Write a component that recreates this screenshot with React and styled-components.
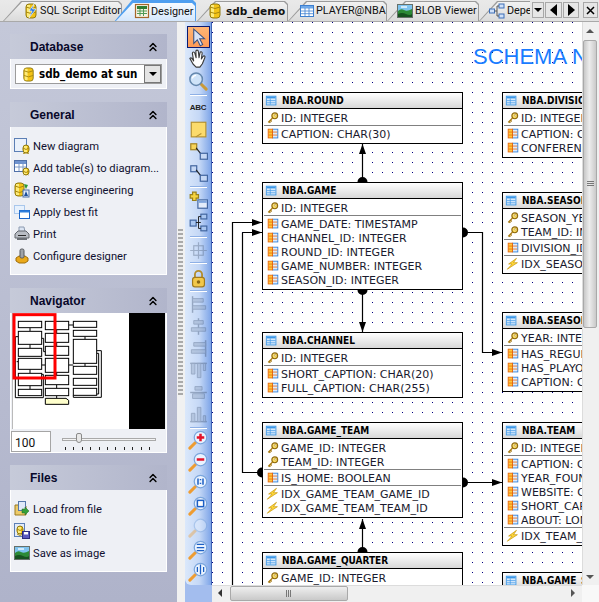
import React from "react";
import styled, { createGlobalStyle } from "styled-components";
import { ChevronsUp } from "lucide-react";

const GlobalStyle = createGlobalStyle`
  html, body { margin: 0; padding: 0; background: #f0f0f0; overflow: hidden; }
  * { box-sizing: border-box; }
  svg { flex: none; display: block; }
`;

const UI_FONT = `Roboto, "Liberation Sans", Arial, sans-serif`;
const HEAD_FONT = `"Liberation Sans", Arial, sans-serif`;
const BOLD_FONT = `"DejaVu Sans Condensed", "DejaVu Sans", sans-serif`;

// ---- icons
const Svg = ({ size = 16, children, dim }) => (
  <svg width={size} height={size} viewBox="0 0 16 16" style={dim ? { opacity: 0.4 } : undefined}>
    {children}
  </svg>
);

const Cylinder = ({ x = 3, y = 1, w = 10, h = 14 }) => (
  <g>
    <rect x={x} y={y} width={w} height={h} rx="3" fill="#f3c316" stroke="#8f7a12" />
    <rect x={x + 1} y={y + 1} width="3" height={h - 2} fill="#fdeb7a" />
    <path d={`M${x} ${y + 3}q${w / 2} 3 ${w} 0M${x} ${y + 8}q${w / 2} 3 ${w} 0`} fill="none" stroke="#a8890f" />
  </g>
);
const DbIcon = ({ size }) => <Svg size={size}><Cylinder /></Svg>;
const SqlIcon = () => (
  <Svg>
    <Cylinder />
    <path d="M11 1L6 8h3l-3 7 7-9H9.500z" fill="#2b7de9" stroke="#fff" strokeWidth="0.6" />
  </Svg>
);
const DesignerIcon = () => (
  <Svg>
    <rect x="1.500" y="1.500" width="13" height="13" fill="#f7f3e3" stroke="#a5672a" strokeWidth="1.200" />
    <rect x="3" y="3" width="10" height="3" fill="#2f7d32" />
    <path d="M3 8h10M3 10.500h10M6 6v7M9.500 6v7" stroke="#4f9a55" />
  </Svg>
);
const GridIcon = ({ head = "#6fa8e8", line = "#3d7fd0", size }) => (
  <Svg size={size}>
    <rect x="1.500" y="2.500" width="13" height="11" fill="#fff" stroke={line} />
    <rect x="2" y="3" width="12" height="2.500" fill={head} />
    <path d="M2 8h12M2 10.700h12M6 5v8M10 5v8" stroke={line} strokeWidth="0.8" />
  </Svg>
);
const PictureIcon = () => (
  <Svg>
    <rect x="0.500" y="1.500" width="15" height="13" fill="#7ec3ef" stroke="#66706a" />
    <path d="M1 8q3-3 6-1t8-1v8H1z" fill="#2c8a36" />
    <path d="M1 11q4-2 8 0t6 0v3H1z" fill="#16521f" />
    <path d="M4 4h6" stroke="#eef8ff" strokeWidth="1.500" />
  </Svg>
);
const DependIcon = () => (
  <Svg>
    <rect x="0.500" y="6" width="5" height="4" fill="#cfe0f8" stroke="#3d6fb8" />
    <rect x="10" y="1" width="5" height="4" fill="#cfe0f8" stroke="#3d6fb8" />
    <rect x="10" y="11" width="5" height="4" fill="#cfe0f8" stroke="#3d6fb8" />
    <path d="M5.500 8H8M8 3v10M8 3h2M8 13h2" stroke="#555" fill="none" />
  </Svg>
);
const KeyIcon = () => (
  <Svg size={14}>
    <circle cx="10" cy="5.500" r="3.300" fill="#ffe066" stroke="#8f6a10" strokeWidth="1.300" />
    <circle cx="10.500" cy="5" r="1" fill="#fff" stroke="#8f6a10" strokeWidth="0.500" />
    <path d="M7.500 8L2.500 13M3.500 12l1.500 1.500M5 10.500l1.500 1.500" stroke="#a8790f" strokeWidth="1.500" fill="none" />
  </Svg>
);
const FieldIcon = () => (
  <Svg size={14}>
    <rect x="7.500" y="2.500" width="6" height="10" fill="#dcecff" stroke="#2f7fd8" />
    <rect x="2.500" y="2.500" width="5" height="10" fill="#ffc83a" stroke="#e8650a" />
    <path d="M3 5.800h10M3 9.200h10" stroke="#e8650a" strokeWidth="0.900" />
  </Svg>
);
const BoltIcon = () => (
  <Svg size={14}>
    <path d="M12 1.500L3 8h4L1.500 14 13 6.500H8.500z" fill="#ffd93a" stroke="#c9960c" strokeWidth="0.800" />
  </Svg>
);
const TableHeadIcon = () => (
  <Svg size={14}>
    <rect x="1.500" y="2.500" width="11" height="10" fill="#d6e9fb" stroke="#3c97e6" />
    <rect x="2" y="3" width="10" height="2" fill="#3c97e6" />
    <path d="M2 7.500h10M2 10h10M6 5v7" stroke="#3c97e6" strokeWidth="0.800" />
  </Svg>
);
const NewDiagramIcon = () => (
  <Svg>
    <rect x="0.500" y="0.500" width="12" height="13" fill="#eaf1fb" stroke="#5c7fb5" />
    <Cylinder x={9} y={7} w={6} h={8} />
  </Svg>
);
const AddTablesIcon = () => (
  <Svg>
    <rect x="0.500" y="0.500" width="12" height="11" fill="#fff" stroke="#5070a8" />
    <rect x="1" y="1" width="11" height="3" fill="#6f93cf" />
    <path d="M1 7h11M5 4v7M9 4v7" stroke="#7f9bc8" />
    <Cylinder x={9} y={8} w={6} h={7} />
  </Svg>
);
const ReverseIcon = () => (
  <Svg>
    <Cylinder x={1} y={1} w={9} h={13} />
    <path d="M10 2l4 1-2 4-1-2z" fill="#2f9a35" />
    <rect x="9" y="8" width="6" height="7" fill="#e3ecfa" stroke="#4b6ea8" />
    <path d="M12 9l2 5h-4z" fill="#1e4f9c" />
  </Svg>
);
const BestFitIcon = () => (
  <Svg>
    <rect x="0.500" y="1.500" width="10" height="8" fill="#e7f1fd" stroke="#a9c7ec" />
    <rect x="5.500" y="6.500" width="10" height="8" fill="#fff" stroke="#1c66c8" />
    <rect x="5.500" y="6.500" width="10" height="2" fill="#2f7fdc" />
  </Svg>
);
const PrintIcon = () => (
  <Svg>
    <path d="M5 1h5l1 5H5z" fill="#dbe4f2" stroke="#8d9bb0" />
    <path d="M1 8l3-3h8l3 3v4H1z" fill="#b9bdc4" stroke="#62666d" />
    <path d="M3 12h10v2H3z" fill="#6c7076" />
    <path d="M4 9.500h8" stroke="#2b2b2b" />
  </Svg>
);
const ConfigureIcon = () => (
  <Svg>
    <path d="M2 10l3-2h6l3 2v3l-3 2H5l-3-2z" fill="#eaa91a" stroke="#a06f0c" />
    <rect x="6" y="1" width="4" height="9" rx="1.500" fill="#9fa3a8" stroke="#55585c" />
  </Svg>
);
const LoadIcon = () => (
  <Svg>
    <path d="M1 4h5l1 1h5v9H1z" fill="#edcb6a" stroke="#9a7a22" />
    <rect x="4.500" y="0.500" width="7" height="9" fill="#dfe9f8" stroke="#5578aa" />
    <path d="M8 8h3V6l4 4-4 4v-2H8z" fill="#35a03a" stroke="#1c6b20" strokeWidth="0.500" />
  </Svg>
);
const SaveFileIcon = () => (
  <Svg>
    <rect x="0.500" y="0.500" width="10" height="13" fill="#e3ebf8" stroke="#5c7fb5" />
    <Cylinder x={3} y={3} w={6} h={8} />
    <rect x="8.500" y="8.500" width="7" height="7" fill="#5a5ac0" stroke="#2c2c80" />
    <rect x="10" y="9" width="4" height="2.500" fill="#fff" />
  </Svg>
);

const ArrowTool = () => (
  <Svg size={19}>
    <path d="M4 1v12l3-3 2.500 5 2-1-2.500-5h4z" fill="#d8e2f5" stroke="#39507f" strokeWidth="0.900" />
  </Svg>
);
const HandTool = () => (
  <Svg size={20}>
    <path
      d="M1.500 7.500c1-1 2 0 3 2L3.500 3.500c0-1.500 1.500-1.500 2 0l1 3.500-.2-5c0-1.500 1.800-1.500 2 0l.5 5 .8-4c.3-1.300 1.800-1 1.700.3l-.6 4.700 1.300-2c.8-1 2-.3 1.500.8l-2 5-2 2.700H6.500L4 12z"
      fill="#fff"
      stroke="#3a3a3a"
      strokeWidth="0.900"
      strokeLinejoin="round"
    />
  </Svg>
);
const ZoomTool = () => (
  <Svg size={20}>
    <path d="M10 10l4.500 4.500" stroke="#c99a3a" strokeWidth="2.400" strokeLinecap="round" />
    <circle cx="6.500" cy="6.500" r="5" fill="#cfe3f8" stroke="#6487ad" strokeWidth="1.200" />
    <path d="M3.500 6a3 3 0 0 1 3-2.500" stroke="#fff" fill="none" />
  </Svg>
);
const Magnifier = ({ children, dim }) => (
  <Svg size={20} dim={dim}>
    <path d="M6 10l-4.500 4.500" stroke="#ee9c32" strokeWidth="2.400" strokeLinecap="round" />
    <circle cx="10" cy="6" r="5" fill="#eaf3ff" stroke="#7aa5dc" />
    {children}
  </Svg>
);
const AbcTool = () => <AbcText>ABC</AbcText>;
const NoteTool = () => (
  <Svg size={18}>
    <rect x="2" y="2" width="13" height="13" fill="#fbdb6c" stroke="#b48f2c" />
    <path d="M6 15l5-3" stroke="#b48f2c" />
  </Svg>
);
const LinkTool = ({ note }) => (
  <Svg size={19}>
    <rect x="1.500" y="1.500" width="5" height="5" fill={note ? "#f7d45a" : "#c6d8f5"} stroke={note ? "#a38320" : "#41659f"} />
    <path d="M6 5l4 5" stroke="#222" />
    <rect x="9.500" y="9.500" width="6" height="5" fill="#c6d8f5" stroke="#41659f" />
  </Svg>
);
const AddEntityTool = () => (
  <Svg size={19}>
    <path d="M3 1h3v2h2v3H6v2H3V6H1V3h2z" fill="#f6d43f" stroke="#98801c" />
    <rect x="7.500" y="7.500" width="8" height="7" fill="#e3ecfa" stroke="#41659f" />
    <rect x="8" y="8" width="7" height="2" fill="#80a5dc" />
  </Svg>
);
const HierarchyTool = () => (
  <Svg size={19}>
    <rect x="1" y="6" width="5" height="5" fill="#a9c6f0" stroke="#41659f" />
    <rect x="10" y="1" width="5" height="4" fill="#a9c6f0" stroke="#41659f" />
    <rect x="10" y="11" width="5" height="4" fill="#a9c6f0" stroke="#41659f" />
    <path d="M6 8h2M8 3v10M8 3h2M8 13h2M6 8h4" stroke="#222" fill="none" strokeWidth="0.800" />
  </Svg>
);
const GuideTool = () => (
  <Svg size={19} dim>
    <rect x="4" y="4" width="8" height="8" fill="none" stroke="#54657f" />
    <path d="M8 1v14M1 8h14" stroke="#54657f" />
  </Svg>
);
const LockTool = () => (
  <Svg size={19}>
    <path d="M5 7V4.500a3 3 0 0 1 6 0V7" fill="none" stroke="#b38b2a" strokeWidth="1.500" />
    <rect x="3" y="7" width="10" height="8" rx="2" fill="#f2c84b" stroke="#a17a1e" />
    <circle cx="8" cy="11" r="1.500" fill="#8a6716" />
  </Svg>
);
const AlignTool = ({ d, bars }) => (
  <Svg size={19} dim>
    <path d={d} stroke="#3f5270" strokeWidth="1.200" fill="none" />
    <path d={bars} fill="#8ea0bb" stroke="#3f5270" strokeWidth="0.700" />
  </Svg>
);

const Minimap = () => {
  const cols = [
    [55, 125, [[94, 113], [124, 163], [175, 199], [205, 238], [250, 287], [298, 317]]],
    [136, 206, [[94, 119], [130, 157], [169, 196], [205, 247], [256, 284], [295, 317]]],
    [220, 290, [[94, 112], [121, 139], [148, 220], [229, 253], [265, 286], [295, 316]]],
  ];
  return (
    <MinimapFrame>
      <svg width="153" height="116" viewBox="36 69 459 348">
        <rect x="36" y="69" width="351" height="348" fill="#fff" />
        <rect x="387" y="69" width="108" height="348" fill="#000" />
        <path d="M36 69v348" stroke="#777" strokeWidth="3" />
        <path
          d="M90 113v11M90 163v12M90 238v12M90 287v11M170 119v11M170 157v12M170 247v9M170 284v11M170 317v8M255 139v9M255 220v9M206 105h14M206 225h14M125 225h11M125 145h6v40h5
          M55 140h-9v183h84v-70h-5M290 182h14v140h-84v-6M290 190h6v122h-6M55 215h-5"
          stroke="#000"
          strokeWidth="3"
          fill="none"
        />
        {cols.map(([x1, x2, rows]) =>
          rows.map(([y1, y2]) => (
            <rect key={x1 + "-" + y1} x={x1} y={y1} width={x2 - x1} height={y2 - y1} fill="#fff" stroke="#000" strokeWidth="3" />
          ))
        )}
        <path d="M136 325h62l8 6v12h-70z" fill="#ffffcc" stroke="#000" strokeWidth="3" />
        <rect x="42" y="74" width="123" height="190" fill="none" stroke="#f00" strokeWidth="9" />
      </svg>
    </MinimapFrame>
  );
};

// ---- tab strip
const TabStrip = styled.div`
  height: 22px;
  display: flex;
  position: relative;
  background: linear-gradient(#e9e9e9, #e2e2e2);
  border-bottom: 1px solid #a9a9a9;
  overflow: hidden;
`;
const TabList = styled.div`
  display: flex;
  width: 530px;
  overflow: hidden;
  padding-left: 3px;
`;
const Tab = styled.div`
  position: relative;
  flex: none;
  width: ${(p) => p.$w}px;
  height: ${(p) => (p.$active ? 22 : 21)}px;
  margin-left: ${(p) => p.$ml || 0}px;
  padding-left: ${(p) => p.$pl}px;
  display: flex;
  align-items: center;
  gap: ${(p) => p.$gap || 1}px;
  z-index: ${(p) => (p.$active ? 2 : 1)};
  font: ${(p) => (p.$bold ? `bold 10.500px "DejaVu Sans", sans-serif` : `10.800px ${UI_FONT}`)};
  color: #101010;
  white-space: nowrap;
  &::before,
  &::after {
    content: "";
    position: absolute;
    z-index: -1;
    clip-path: polygon(0 100%, 18px 0, calc(100% - 3px) 0, 100% 3px, 100% 100%);
  }
  &::before {
    inset: ${(p) => (p.$active ? 0 : "1px 0 0 0")};
    background: ${(p) => (p.$active ? "#4f9ff0" : "#9b9b9b")};
  }
  &::after {
    inset: ${(p) => (p.$active ? "3px 1px 0 1px" : "2px 1px 0 1px")};
    background: ${(p) =>
      p.$active ? "linear-gradient(#f7fbff, #d3e6fc)" : "linear-gradient(#f2f2f2, #dadada)"};
  }
`;
const StripButton = styled.button`
  position: absolute;
  top: 2px;
  left: ${(p) => p.$x}px;
  width: ${(p) => p.$w}px;
  height: 16px;
  padding: 0;
  display: flex;
  align-items: center;
  justify-content: center;
  background: #e6e6e6;
  border: 1px solid #a8a8a8;
`;
const Triangle = styled.span`
  display: block;
  width: 0;
  height: 0;
  ${(p) =>
    p.$dir === "down" && `border-left:4px solid transparent;border-right:4px solid transparent;border-top:4px solid ${p.$color || "#000"};`}
  ${(p) =>
    p.$dir === "up" && `border-left:4px solid transparent;border-right:4px solid transparent;border-bottom:4px solid ${p.$color || "#000"};`}
  ${(p) =>
    p.$dir === "left" && `border-top:${p.$s || 6}px solid transparent;border-bottom:${p.$s || 6}px solid transparent;border-right:${p.$s ? 4 : 7}px solid ${p.$color || "#000"};`}
  ${(p) =>
    p.$dir === "right" && `border-top:${p.$s || 6}px solid transparent;border-bottom:${p.$s || 6}px solid transparent;border-left:${p.$s ? 4 : 7}px solid ${p.$color || "#000"};`}
`;

// ---- sidebar
const Body = styled.div`
  display: flex;
  height: 580px;
`;
const Sidebar = styled.aside`
  width: 177px;
  flex: none;
  padding: 12px 10px 0;
  background: linear-gradient(#c4c8d9, #afb3ca);
  display: flex;
  flex-direction: column;
  gap: 13px;
`;
const Panel = styled.section`
  display: flex;
  flex-direction: column;
  margin-top: ${(p) => p.$mt || 0}px;
`;
const PanelHead = styled.header`
  height: 25px;
  padding: 0 7px 0 20px;
  display: flex;
  align-items: center;
  justify-content: space-between;
  background: linear-gradient(90deg, #c6cad9, #b1b5cb);
  font: bold 12px ${HEAD_FONT};
  color: #08082a;
`;
const PanelBody = styled.div`
  background: #eef0f5;
  border: 1px solid #fff;
  border-top: 0;
  padding: ${(p) => p.$pad || "0"};
`;
const Combo = styled.div`
  height: 20px;
  display: flex;
  align-items: center;
  gap: 3px;
  padding-left: 5px;
  background: #fff;
  border: 1px solid #9c9c9c;
  font: bold 11.500px ${BOLD_FONT};
  color: #000;
  position: relative;
`;
const ComboArrow = styled.span`
  position: absolute;
  right: 0;
  top: 0;
  width: 17px;
  height: 18px;
  display: flex;
  align-items: center;
  justify-content: center;
  background: #e4e4e4;
  border: 1px solid #777;
`;
const ActionRow = styled.div`
  height: 22px;
  display: flex;
  align-items: center;
  gap: 3px;
  padding-left: 3px;
  font: 11.200px ${UI_FONT};
  color: #101030;
  white-space: nowrap;
`;
const MinimapFrame = styled.div`
  padding-left: 1px;
  background: #eef0f5;
`;
const ZoomRow = styled.div`
  height: 23px;
  padding-top: 2px;
  display: flex;
  background: #eef0f5;
`;
const ZoomInput = styled.div`
  width: 40px;
  height: 21px;
  padding: 4px 0 0 3px;
  background: #fff;
  border: 1px solid #a5a5a5;
  font: 12px ${UI_FONT};
  color: #111;
`;
const Slider = styled.div`
  position: relative;
  margin-left: 11px;
  width: 94px;
  height: 21px;
`;
const SliderTrack = styled.div`
  position: absolute;
  top: 7px;
  left: 0;
  right: 0;
  height: 3px;
  background: #f4f4f4;
  border: 1px solid #a9a9a9;
`;
const SliderThumb = styled.div`
  position: absolute;
  top: 2px;
  left: 14px;
  width: 6px;
  height: 10px;
  background: #e8e8e8;
  border: 1px solid #8a8a8a;
  border-radius: 2px 2px 3px 3px;
`;
const SliderTicks = styled.div`
  position: absolute;
  top: 16px;
  left: 3px;
  right: 0;
  height: 3px;
  background: repeating-linear-gradient(90deg, #222 0 1px, transparent 1px 8.400px);
`;
const Splitter = styled.div`
  width: 8px;
  flex: none;
  background: #f1f1f1;
  padding: 207px 0 0 1px;
`;
const SplitterGrip = styled.div`
  width: 5px;
  height: 166px;
  background: repeating-linear-gradient(#aaa 0 2px, #eee 2px 4px);
`;

// ---- toolbar
const ToolbarWrap = styled.div`
  width: 27px;
  flex: none;
  background: #a3bdee;
  padding-bottom: 17px;
`;
const Toolbar = styled.div`
  height: 100%;
  padding: 4px 2px 0;
  display: flex;
  flex-direction: column;
  align-items: center;
  background: linear-gradient(90deg, #dbe8fb, #c5d8f6 55%, #7ea5e8);
  border-right: 1px solid #3f62b4;
  border-radius: 0 0 0 6px;
`;
const ToolButton = styled.div`
  flex: none;
  width: 23px;
  height: 22px;
  display: flex;
  align-items: center;
  justify-content: center;
  ${(p) =>
    p.$active &&
    `background: linear-gradient(#ffb676, #fd9a56); border: 1px solid #0a1a70;`}
`;
const ToolSep = styled.div`
  flex: none;
  width: 17px;
  height: 1px;
  margin: ${(p) => p.$top}px 0 ${(p) => p.$bottom}px;
  background: #fff;
  box-shadow: 0 -1px 0 #8eb0e6;
`;
const AbcText = styled.span`
  font: bold 8px ${HEAD_FONT};
  color: #222;
  letter-spacing: -0.3px;
`;

// ---- diagram
const DesignArea = styled.div`
  flex: 1;
  display: grid;
  grid-template-columns: 370px 17px;
  grid-template-rows: 563px 17px;
`;
const Canvas = styled.div`
  position: relative;
  overflow: hidden;
  background:
    linear-gradient(to bottom, transparent 1px, #fff 1px) 0 0 / 10px 10px,
    linear-gradient(to right, #000080 1px, #fff 1px) 0 0 / 10px 10px;
`;
const SchemaTitle = styled.div`
  position: absolute;
  left: 261px;
  top: 22px;
  font: 22px ${HEAD_FONT};
  color: #1a7cff;
  white-space: nowrap;
`;
const Wires = styled.svg`
  position: absolute;
  left: 0;
  top: 0;
`;
const EntityBox = styled.div`
  position: absolute;
  left: ${(p) => p.$x}px;
  top: ${(p) => p.$y}px;
  width: 201px;
  background: #fff;
  border: 1px solid #000;
  font: 11px "DejaVu Sans", Verdana, sans-serif;
  color: #1a1a2e;
`;
const EntityHead = styled.div`
  height: 16px;
  padding-left: 2px;
  display: flex;
  align-items: center;
  gap: 3px;
  border-bottom: 1px solid #000;
  background: linear-gradient(#fff, #d8d8d8);
  font: bold 10px ${BOLD_FONT};
  color: #000;
  white-space: nowrap;
`;
const EntitySection = styled.div`
  padding: ${(p) => (p.$first ? 2 : 1)}px 0 ${(p) => (p.$last ? 2 : 0)}px;
  ${(p) =>
    !p.$first &&
    `position: relative;
     &::before { content: ""; position: absolute; left: 1px; right: 1px; top: -1px; height: 1px; background: #808080; }
     margin-top: 1px;`}
`;
const EntityRow = styled.div`
  height: 14px;
  padding-left: 3px;
  display: flex;
  align-items: center;
  gap: 1px;
  white-space: nowrap;
`;
const VScroll = styled.div`
  position: relative;
  background: #f0f0f0;
  border-left: 1px solid #dcdcdc;
`;
const ScrollArrow = styled.span`
  position: absolute;
  ${(p) => p.$pos}
`;
const VThumb = styled.div`
  position: absolute;
  left: 0;
  top: 18px;
  width: 14px;
  height: 288px;
  display: flex;
  align-items: center;
  justify-content: center;
  background: linear-gradient(90deg, #c8c8c8, #ececec 45%, #c9c9c9);
  border: 1px solid #a9a9a9;
  border-radius: 2px;
`;
const HScroll = styled.div`
  position: relative;
  background: #f0f0f0;
  border-top: 1px solid #dcdcdc;
`;
const HThumb = styled.div`
  position: absolute;
  left: 18px;
  top: 0;
  width: 118px;
  height: 15px;
  display: flex;
  align-items: center;
  justify-content: center;
  background: linear-gradient(#efefef, #c9c9c9);
  border: 1px solid #a9a9a9;
  border-radius: 2px;
`;
const Grip = styled.span`
  width: ${(p) => (p.$v ? 7 : 6)}px;
  height: ${(p) => (p.$v ? 6 : 7)}px;
  background: repeating-linear-gradient(
    ${(p) => (p.$v ? "180deg" : "90deg")},
    #777 0 1px,
    transparent 1px 2px
  );
`;
const Corner = styled.div`
  background: #f8f8f8;
`;

const K = "k";
const F = "f";
const X = "x";
const rowIcon = { [K]: <KeyIcon />, [F]: <FieldIcon />, [X]: <BoltIcon /> };

const entities = [
  { x: 50, y: 70, name: "NBA.ROUND", sections: [[[K, "ID: INTEGER"]], [[F, "CAPTION: CHAR(30)"]]] },
  {
    x: 50, y: 160, name: "NBA.GAME",
    sections: [
      [[K, "ID: INTEGER"]],
      [[F, "GAME_DATE: TIMESTAMP"], [F, "CHANNEL_ID: INTEGER"], [F, "ROUND_ID: INTEGER"], [F, "GAME_NUMBER: INTEGER"], [F, "SEASON_ID: INTEGER"]],
    ],
  },
  {
    x: 50, y: 310, name: "NBA.CHANNEL",
    sections: [[[K, "ID: INTEGER"]], [[F, "SHORT_CAPTION: CHAR(20)"], [F, "FULL_CAPTION: CHAR(255)"]]],
  },
  {
    x: 50, y: 400, name: "NBA.GAME_TEAM",
    sections: [
      [[K, "GAME_ID: INTEGER"], [K, "TEAM_ID: INTEGER"]],
      [[F, "IS_HOME: BOOLEAN"]],
      [[X, "IDX_GAME_TEAM_GAME_ID"], [X, "IDX_GAME_TEAM_TEAM_ID"]],
    ],
  },
  { x: 50, y: 530, name: "NBA.GAME_QUARTER", sections: [[[K, "GAME_ID: INTEGER"], [K, "QUARTER: INTEGER"]]] },
  {
    x: 290, y: 70, name: "NBA.DIVISION",
    sections: [[[K, "ID: INTEGER"]], [[F, "CAPTION: CHAR(30)"], [F, "CONFERENCE_ID: INTEGER"]]],
  },
  {
    x: 290, y: 170, name: "NBA.SEASON_TEAM",
    sections: [
      [[K, "SEASON_YEAR: INTEGER"], [K, "TEAM_ID: INTEGER"]],
      [[F, "DIVISION_ID: INTEGER"]],
      [[X, "IDX_SEASON_TEAM_ID"]],
    ],
  },
  {
    x: 290, y: 290, name: "NBA.SEASON",
    sections: [[[K, "YEAR: INTEGER"]], [[F, "HAS_REGULAR: BOOLEAN"], [F, "HAS_PLAYOFF: BOOLEAN"], [F, "CAPTION: CHAR(30)"]]],
  },
  {
    x: 290, y: 400, name: "NBA.TEAM",
    sections: [
      [[K, "ID: INTEGER"]],
      [[F, "CAPTION: CHAR(30)"], [F, "YEAR_FOUNDED: INTEGER"], [F, "WEBSITE: CHAR(255)"], [F, "SHORT_CAPTION: CHAR(20)"], [F, "ABOUT: LONG VARCHAR"]],
      [[X, "IDX_TEAM_DIVISION_ID"]],
    ],
  },
  { x: 290, y: 550, name: "NBA.GAME_STATS", sections: [[[K, "GAME_ID: INTEGER"]]] },
];

const Entity = ({ x, y, name, sections }) => (
  <EntityBox $x={x} $y={y}>
    <EntityHead>
      <TableHeadIcon />
      {name}
    </EntityHead>
    {sections.map((rows, i) => (
      <EntitySection key={i} $first={i === 0} $last={i === sections.length - 1}>
        {rows.map(([kind, label]) => (
          <EntityRow key={label}>
            {rowIcon[kind]}
            <span>{label}</span>
          </EntityRow>
        ))}
      </EntitySection>
    ))}
  </EntityBox>
);

// wires use canvas coordinates: page position minus (212, 22)
const Wiring = () => (
  <Wires width="370" height="563" viewBox="0 0 370 563">
    <g stroke="#000" strokeWidth="1.200" fill="none">
      <path d="M150.500 122V160M150.500 268V310M150.500 497V530" />
      <path d="M20.500 563V200.500H50M30.500 210.500H50M30.500 210.500V450.500H50" />
      <path d="M251 210.500H270.500V330.500H290M251 460.500H290" />
    </g>
    <g fill="#000">
      <path d="M150.500 122l-3.500 10h7zM150.500 310l-3.500-10h7zM150.500 497l-3.500 10h7z" />
      <path d="M50 200.500l-10-3.500v7zM50 210.500l-10-3.500v7zM290 330.500l-10-3.500v7zM290 460.500l-10-3.500v7z" />
      <path d="M145.500 160a5 5 0 0 1 10 0zM145.500 530a5 5 0 0 1 10 0zM145.500 268a5 5 0 0 0 10 0z" />
      <path d="M50 445.500a5 5 0 0 0 0 10zM251 205.500a5 5 0 0 1 0 10zM251 455.500a5 5 0 0 1 0 10z" />
    </g>
  </Wires>
);

const actions = [
  [<NewDiagramIcon />, "New diagram"],
  [<AddTablesIcon />, "Add table(s) to diagram..."],
  [<ReverseIcon />, "Reverse engineering"],
  [<BestFitIcon />, "Apply best fit"],
  [<PrintIcon />, "Print"],
  [<ConfigureIcon />, "Configure designer"],
];
const fileActions = [
  [<LoadIcon />, "Load from file"],
  [<SaveFileIcon />, "Save to file"],
  [<PictureIcon />, "Save as image"],
];

const PanelTitle = ({ title }) => (
  <PanelHead>
    {title}
    <ChevronsUp size={14} strokeWidth={2.500} color="#000" />
  </PanelHead>
);

export default function App() {
  return (
    <>
      <GlobalStyle />
      <TabStrip>
        <TabList>
          <Tab $w={119} $pl={20}><SqlIcon />SQL Script Editor</Tab>
          <Tab $w={82} $ml={-8} $pl={20} $active><DesignerIcon />Designer</Tab>
          <Tab $w={91} $ml={1} $pl={10} $gap={3} $bold><DbIcon />sdb_demo</Tab>
          <Tab $w={99} $pl={11}><GridIcon />PLAYER@NBA</Tab>
          <Tab $w={92} $pl={10} $gap={2}><PictureIcon />BLOB Viewer</Tab>
          <Tab $w={80} $pl={10} $gap={2}><DependIcon />Dependencies</Tab>
        </TabList>
        <StripButton $x={532} $w={12}><Triangle $dir="down" /></StripButton>
        <StripButton $x={545} $w={17}><Triangle $dir="left" /></StripButton>
        <StripButton $x={563} $w={16}><Triangle $dir="right" /></StripButton>
        <StripButton $x={583} $w={15}>
          <svg width="9" height="9" viewBox="0 0 9 9"><path d="M1 1l7 7M8 1L1 8" stroke="#000" strokeWidth="1.500" /></svg>
        </StripButton>
      </TabStrip>
      <Body>
        <Sidebar>
          <Panel>
            <PanelTitle title="Database" />
            <PanelBody $pad="5px 4px 4px 4px">
              <Combo>
                <DbIcon size={15} />
                sdb_demo at sun
                <ComboArrow><Triangle $dir="down" /></ComboArrow>
              </Combo>
            </PanelBody>
          </Panel>
          <Panel>
            <PanelTitle title="General" />
            <PanelBody $pad="8px 0 7px">
              {actions.map(([icon, label]) => (
                <ActionRow key={label}>{icon}{label}</ActionRow>
              ))}
            </PanelBody>
          </Panel>
          <Panel>
            <PanelTitle title="Navigator" />
            <PanelBody>
              <Minimap />
              <ZoomRow>
                <ZoomInput>100</ZoomInput>
                <Slider>
                  <SliderTrack />
                  <SliderThumb />
                  <SliderTicks />
                </Slider>
              </ZoomRow>
            </PanelBody>
          </Panel>
          <Panel $mt={-1}>
            <PanelTitle title="Files" />
            <PanelBody $pad="8px 0 7px">
              {fileActions.map(([icon, label]) => (
                <ActionRow key={label}>{icon}{label}</ActionRow>
              ))}
            </PanelBody>
          </Panel>
        </Sidebar>
        <Splitter><SplitterGrip /></Splitter>
        <ToolbarWrap>
          <Toolbar>
            <ToolButton $active><ArrowTool /></ToolButton>
            <ToolButton><HandTool /></ToolButton>
            <ToolButton><ZoomTool /></ToolButton>
            <ToolSep $top={3} $bottom={0} />
            <ToolButton><AbcTool /></ToolButton>
            <ToolButton><NoteTool /></ToolButton>
            <ToolButton><LinkTool note /></ToolButton>
            <ToolButton><LinkTool /></ToolButton>
            <ToolSep $top={3} $bottom={1} />
            <ToolButton><AddEntityTool /></ToolButton>
            <ToolButton><HierarchyTool /></ToolButton>
            <ToolSep $top={4} $bottom={1} />
            <ToolButton><GuideTool /></ToolButton>
            <ToolSep $top={2} $bottom={3} />
            <ToolButton><LockTool /></ToolButton>
            <ToolSep $top={2} $bottom={1} />
            <ToolButton><AlignTool d="M3 1v14" bars="M3 3h9v3H3zM3 9h11v3H3z" /></ToolButton>
            <ToolButton><AlignTool d="M8 1v14" bars="M4 3h8v3H4zM2 9h12v3H2z" /></ToolButton>
            <ToolButton><AlignTool d="M14 1v14" bars="M4 3h10v3H4zM2 9h12v3H2z" /></ToolButton>
            <ToolButton><AlignTool d="M1 2h14" bars="M2 2h3v9H2zM7 2h3v12H7zM12 2h2v6h-2z" /></ToolButton>
            <ToolButton><AlignTool d="M1 8h14" bars="M5 3h6v3H5zM3 9h10v4H3z" /></ToolButton>
            <ToolButton><AlignTool d="M1 14h14" bars="M2 7h3v7H2zM7 2h3v12H7zM12 9h2v5h-2z" /></ToolButton>
            <ToolSep $top={3} $bottom={0} />
            <ToolButton>
              <Magnifier>
                <path d="M7 6h6M10 3v6" stroke="#e3122a" strokeWidth="2" />
              </Magnifier>
            </ToolButton>
            <ToolButton>
              <Magnifier><path d="M7 6h6" stroke="#e3122a" strokeWidth="2" /></Magnifier>
            </ToolButton>
            <ToolButton>
              <Magnifier><path d="M8 3.500v5M12 3.500v5M10 4v1M10 7v1" stroke="#1c5fc4" strokeWidth="1.200" /></Magnifier>
            </ToolButton>
            <ToolButton>
              <Magnifier><rect x="7.500" y="3.500" width="5" height="5" fill="#fff" stroke="#1c5fc4" strokeWidth="1.200" /></Magnifier>
            </ToolButton>
            <ToolButton><Magnifier dim /></ToolButton>
            <ToolButton>
              <Magnifier><path d="M7 6h6M7 3.500h6M7 8.500h6" stroke="#1c5fc4" /></Magnifier>
            </ToolButton>
            <ToolButton>
              <Magnifier><path d="M10 2v8M7.500 4v4M12.500 4v4" stroke="#1c5fc4" /></Magnifier>
            </ToolButton>
          </Toolbar>
        </ToolbarWrap>
        <DesignArea>
          <Canvas>
            <SchemaTitle>SCHEMA NBA</SchemaTitle>
            <Wiring />
            {entities.map((e) => <Entity key={e.name} {...e} />)}
          </Canvas>
          <VScroll>
            <ScrollArrow $pos="top: 7px; left: 3px;"><Triangle $dir="up" $color="#555" /></ScrollArrow>
            <VThumb><Grip $v /></VThumb>
            <ScrollArrow $pos="bottom: 6px; left: 3px;"><Triangle $dir="down" $color="#555" /></ScrollArrow>
          </VScroll>
          <HScroll>
            <ScrollArrow $pos="left: 6px; top: 3px;"><Triangle $dir="left" $s={4} $color="#333" /></ScrollArrow>
            <HThumb><Grip /></HThumb>
            <ScrollArrow $pos="right: 7px; top: 3px;"><Triangle $dir="right" $s={4} $color="#555" /></ScrollArrow>
          </HScroll>
          <Corner />
        </DesignArea>
      </Body>
    </>
  );
}
